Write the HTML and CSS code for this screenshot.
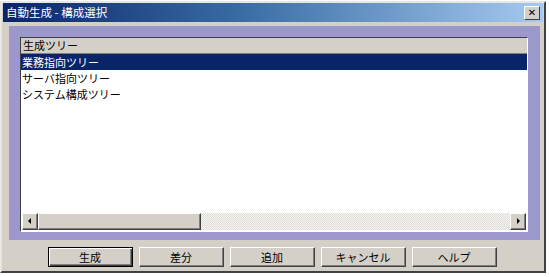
FILE: index.html
```html
<!DOCTYPE html>
<html lang="ja">
<head>
    <meta charset="UTF-8">
    <title>自動生成 - 構成選択</title>
    <link rel="stylesheet" href="styles.css">
</head>
<body>

    <!-- Dialog -->
    <div class="window">
        <div class="titlebar">
            <span class="title">自動生成 - 構成選択</span>
            <span class="close">&#x2715;</span>
        </div>

        <!-- Tree list -->
        <div class="panel">
            <div class="listbox">
                <div class="list-header">生成ツリー</div>
                <div class="list-body">
                    <div class="row selected">業務指向ツリー</div>
                    <div class="row">サーバ指向ツリー</div>
                    <div class="row">システム構成ツリー</div>
                </div>
                <div class="hscroll">
                    <span class="arrow left"></span>
                    <span class="thumb"></span>
                    <span class="track"></span>
                    <span class="arrow right"></span>
                </div>
            </div>
        </div>

        <!-- Buttons -->
        <div class="buttons">
            <button class="btn default">生成</button>
            <button class="btn">差分</button>
            <button class="btn">追加</button>
            <button class="btn">キャンセル</button>
            <button class="btn">ヘルプ</button>
        </div>
    </div>

</body>
</html>
```

FILE: styles.css
```css
body {
    margin: 0;
    background: #ffffff;
    font-family: "Noto Sans CJK JP", "DejaVu Sans", sans-serif;
    font-size: 11px;
}

/* Window frame */
.window {
    box-sizing: border-box;
    width: 546px;
    height: 272px;
    margin-top: 1px;
    background: #d4d0c8;
    border: 2px solid;
    border-color: #e8e6e1 #404040 #404040 #e8e6e1;
    display: flex;
    flex-direction: column;
}

.titlebar {
    height: 19px;
    margin: 0 1px;
    background: linear-gradient(to right, #0a246a, #3a6ea5 45%, #a6caf0);
    display: flex;
    align-items: center;
    justify-content: space-between;
    padding: 0 3px 0 3px;
}

    .titlebar .title {
        color: white;
        font-size: 11.5px;
        line-height: 19px;
    }

    .titlebar .close {
        box-sizing: border-box;
        width: 16px;
        height: 14px;
        background: #d4d0c8;
        border: 1px solid;
        border-color: #ffffff #404040 #404040 #ffffff;
        font-size: 10px;
        font-weight: bold;
        line-height: 12px;
        text-align: center;
        color: #000;
        font-family: "DejaVu Sans", sans-serif;
    }

/* Purple panel */
.panel {
    margin: 4px 4px 0 7px;
    height: 214px;
    box-sizing: border-box;
    background: #9c98cc;
    padding: 11px 12px 8px 11px;
}

.listbox {
    box-sizing: border-box;
    height: 195px;
    background: #ffffff;
    border: 1px solid;
    border-color: #404040 #ffffff #ffffff #404040;
    display: flex;
    flex-direction: column;
}

.list-header {
    height: 15px;
    line-height: 15px;
    padding-left: 2px;
    background: #d4d0c8;
    border-bottom: 1px solid #808080;
    color: #000;
}

.list-body {
    flex-grow: 1;
}

    .list-body .row {
        height: 16px;
        line-height: 16px;
        padding-left: 1px;
        color: #000;
    }

        .list-body .row.selected {
            background: #0a246a;
            color: #ffffff;
        }

/* Horizontal scrollbar */
.hscroll {
    height: 17px;
    margin: 0 1px 1px 1px;
    display: flex;
    background: #eceae6;
}

    .hscroll .arrow,
    .hscroll .thumb {
        box-sizing: border-box;
        height: 17px;
        background: #d4d0c8;
        border: 1px solid;
        border-color: #ffffff #404040 #404040 #ffffff;
        box-shadow: inset -1px -1px 0 #808080;
        position: relative;
    }

    .hscroll .arrow {
        width: 16px;
    }

    .hscroll .thumb {
        width: 163px;
    }

    .hscroll .track {
        flex-grow: 1;
        background-image: repeating-conic-gradient(#ffffff 0 25%, #d4d0c8 0 50%);
        background-size: 2px 2px;
        opacity: 0.6;
    }

    .hscroll .arrow::after {
        content: "";
        position: absolute;
        top: 4px;
        width: 0;
        height: 0;
        border-top: 3px solid transparent;
        border-bottom: 3px solid transparent;
    }

    .hscroll .arrow.left::after {
        left: 5px;
        border-right: 3px solid #000;
    }

    .hscroll .arrow.right::after {
        left: 6px;
        border-left: 3px solid #000;
    }

/* Buttons */
.buttons {
    display: flex;
    justify-content: center;
    gap: 6px;
    margin-top: 7px;
    margin-left: -2px;
}

.btn {
    box-sizing: border-box;
    width: 85px;
    height: 20px;
    padding: 0;
    font-family: "Noto Sans CJK JP", "DejaVu Sans", sans-serif;
    font-size: 11px;
    color: #000;
    background: #d4d0c8;
    border: 1px solid;
    border-color: #ffffff #404040 #404040 #ffffff;
    box-shadow: inset -1px -1px 0 #808080;
}

    .btn.default {
        border: 1px solid #000;
        box-shadow: inset 1px 1px 0 #ffffff, inset -1px -1px 0 #404040, inset -2px -2px 0 #808080;
    }
```
